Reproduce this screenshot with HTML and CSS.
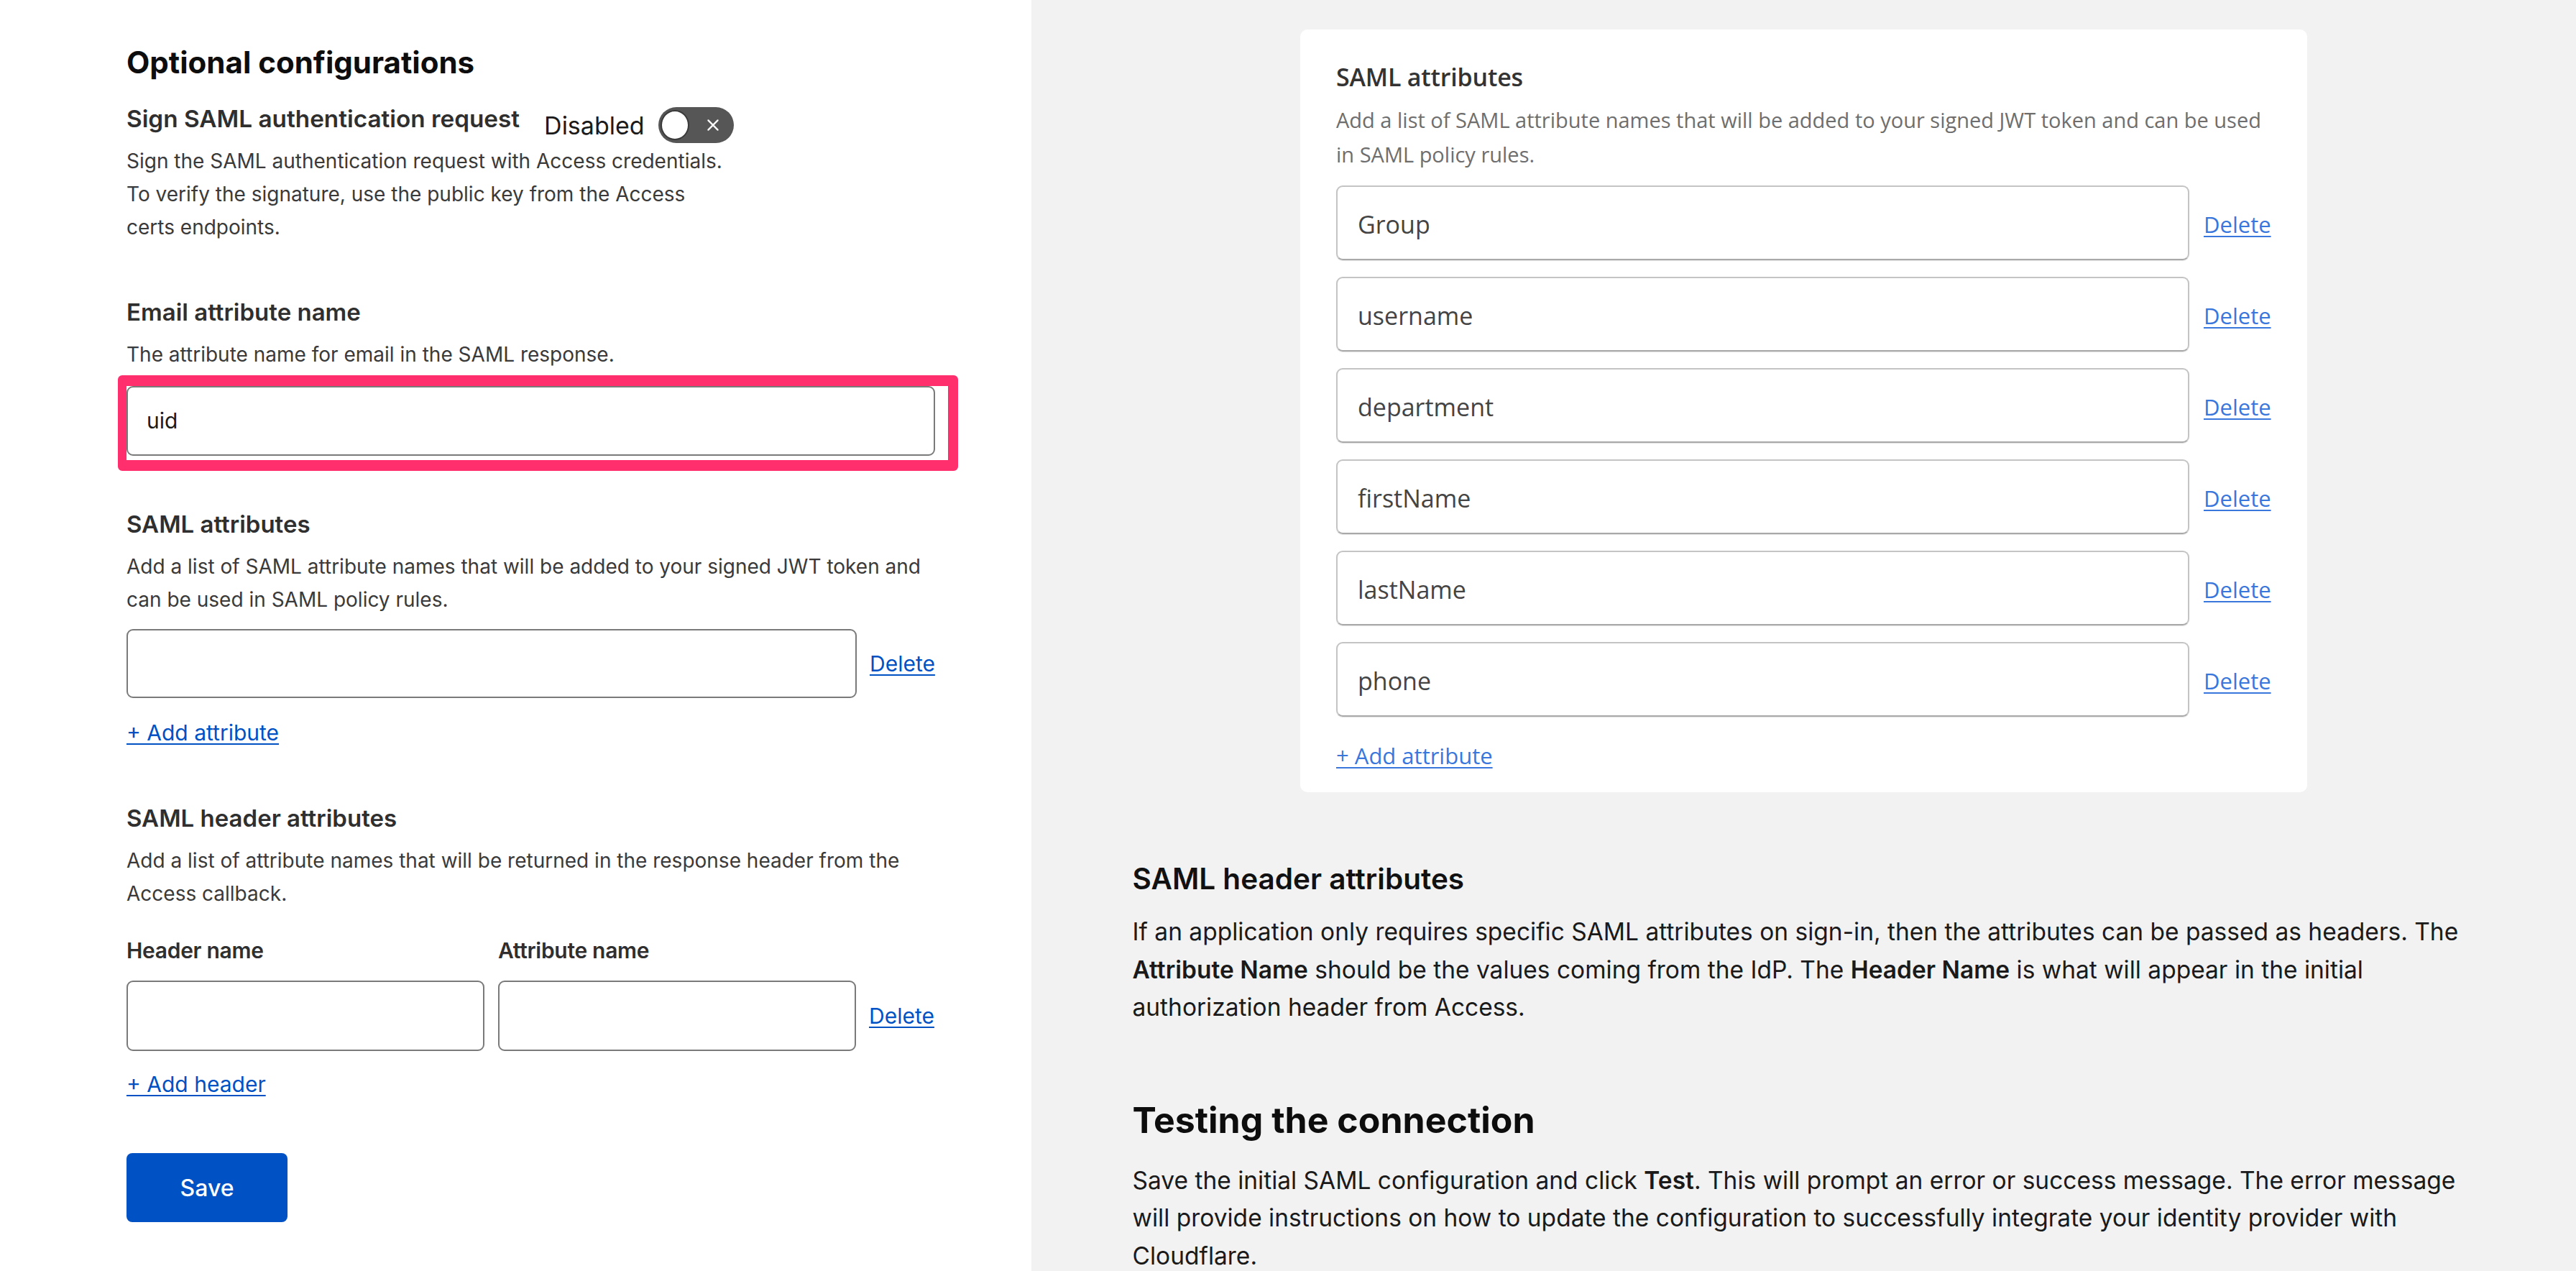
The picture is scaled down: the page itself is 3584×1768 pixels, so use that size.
FILE: index.html
```html
<!DOCTYPE html>
<html lang="en">
<head>
<meta charset="utf-8">
<title>SAML configuration</title>
<link rel="stylesheet" href="styles.css">
</head>
<body>
<div class="page">
  <section class="form-pane">
    <h2 class="title">Optional configurations</h2>

    <div class="toggle-row">
      <span class="label">Sign SAML authentication request</span>
      <span class="toggle-state">Disabled</span>
      <span class="switch">
        <span class="knob"></span>
        <svg class="switch-x" viewBox="0 0 20 20" width="20" height="20"><path d="M4 4 L16 16 M16 4 L4 16" stroke="#fff" stroke-width="2" fill="none" stroke-linecap="round"/></svg>
      </span>
    </div>
    <p class="help help-tight">Sign the SAML authentication request with Access credentials.<br>To verify the signature, use the public key from the Access<br>certs endpoints.</p>

    <div class="label label-email">Email attribute name</div>
    <p class="help help-under">The attribute name for email in the SAML response.</p>
    <div class="highlight">
      <div class="input input-full">uid</div>
    </div>

    <div class="label label-attrs">SAML attributes</div>
    <p class="help help-under">Add a list of SAML attribute names that will be added to your signed JWT token and<br>can be used in SAML policy rules.</p>
    <div class="input-row row-attrs">
      <div class="input input-wide"></div>
      <a class="link" href="#">Delete</a>
    </div>
    <a class="link add-link" href="#">+ Add attribute</a>

    <div class="label label-headers">SAML header attributes</div>
    <p class="help help-under">Add a list of attribute names that will be returned in the response header from the<br>Access callback.</p>
    <div class="pair-labels">
      <span class="pair-label">Header name</span>
      <span class="pair-label">Attribute name</span>
    </div>
    <div class="input-row row-pair">
      <div class="input input-half"></div>
      <div class="input input-half"></div>
      <a class="link" href="#">Delete</a>
    </div>
    <a class="link add-link" href="#">+ Add header</a>

    <div class="actions">
      <button class="save-btn" type="button">Save</button>
    </div>
  </section>

  <section class="doc-pane">
    <div class="card">
      <div class="card-title">SAML attributes</div>
      <p class="card-help">Add a list of SAML attribute names that will be added to your signed JWT token and can be used<br>in SAML policy rules.</p>
      <div class="card-rows">
        <div class="card-row"><div class="card-input">Group</div><a class="card-link" href="#">Delete</a></div>
        <div class="card-row"><div class="card-input">username</div><a class="card-link" href="#">Delete</a></div>
        <div class="card-row"><div class="card-input">department</div><a class="card-link" href="#">Delete</a></div>
        <div class="card-row"><div class="card-input">firstName</div><a class="card-link" href="#">Delete</a></div>
        <div class="card-row"><div class="card-input">lastName</div><a class="card-link" href="#">Delete</a></div>
        <div class="card-row"><div class="card-input">phone</div><a class="card-link" href="#">Delete</a></div>
      </div>
      <a class="card-link card-add" href="#">+ Add attribute</a>
    </div>

    <div class="doc">
      <h3 class="doc-h3">SAML header attributes</h3>
      <p class="doc-p">If an application only requires specific SAML attributes on sign-in, then the attributes can be passed as headers. The<br><strong>Attribute Name</strong> should be the values coming from the IdP. The <strong>Header Name</strong> is what will appear in the initial<br>authorization header from Access.</p>
      <h2 class="doc-h2">Testing the connection</h2>
      <p class="doc-p doc-p-last">Save the initial SAML configuration and click <strong>Test</strong>. This will prompt an error or success message. The error message<br>will provide instructions on how to update the configuration to successfully integrate your identity provider with<br>Cloudflare.</p>
    </div>
  </section>
</div>
</body>
</html>
```

FILE: styles.css
```css
html, body {
  margin: 0;
  padding: 0;
  background: #ffffff;
}

body {
  font-family: Inter, "Noto Sans", "Liberation Sans", sans-serif;
  color: #222;
}

.page {
  display: grid;
  grid-template-columns: 1435px 1fr;
  min-height: 1768px;
}

/* ---------- Left form pane ---------- */
.form-pane {
  background: #fff;
  padding: 64px 0 0 176px;
  display: flex;
  flex-direction: column;
  align-items: flex-start;
}

.title {
  margin: 0;
  font-size: 42px;
  line-height: 46px;
  font-weight: 700;
  color: #0d0d0d;
}

.label {
  font-size: 33px;
  line-height: 40px;
  font-weight: 600;
  color: #2f2f2f;
}

.toggle-row {
  margin-top: 35px;
  height: 52px;
  display: flex;
  align-items: center;
}

.toggle-row .label {
  align-self: flex-start;
  font-size: 33.3px;
}

.toggle-state {
  margin-left: 34px;
  font-size: 34px;
  line-height: 40px;
  color: #1b1b1b;
  margin-top: 8px;
}

.switch {
  margin-left: 19px;
  margin-top: 6px;
  width: 105px;
  height: 50px;
  border-radius: 25px;
  background: #565656;
  display: flex;
  align-items: center;
  justify-content: space-between;
  padding: 0 18px 0 3px;
  box-sizing: border-box;
}

.knob {
  width: 40px;
  height: 42px;
  border-radius: 50%;
  background: #fff;
  border: 2px solid #3a3a3a;
  box-sizing: border-box;
}

.switch-x {
  width: 22px;
  height: 22px;
}

.help {
  margin: 0;
  font-size: 28px;
  line-height: 46px;
  color: #3a3a3a;
}

.help-tight {
  margin-top: 4px;
}

.label-email {
  margin-top: 75px;
}

.help-under {
  margin-top: 16px;
}

.highlight {
  margin-top: 6px;
  margin-left: -12px;
  border: solid #ff2f6e;
  border-width: 15px 14px 15px 12px;
  border-radius: 6px;
  padding: 0 18px 6px 0;
  background: #fff;
}

.input {
  box-sizing: border-box;
  border: 2px solid #7a7a7a;
  border-radius: 9px;
  background: #fff;
  height: 97px;
  font-size: 30px;
  line-height: 93px;
  color: #1a1a1a;
  padding: 0 26px;
}

.input-full {
  width: 1125px;
}

.label-attrs {
  margin-top: 54px;
}

.input-row {
  display: flex;
  align-items: center;
  margin-top: 18px;
}

.input-wide {
  width: 1016px;
  height: 96px;
}

.link {
  color: #0051c3;
  text-decoration: underline;
  text-underline-offset: 4px;
  text-decoration-thickness: 2px;
  font-size: 30px;
  line-height: 40px;
}

.input-row .link {
  margin-left: 18px;
}

.add-link {
  margin-top: 28px;
}

.label-headers {
  margin-top: 79px;
}

.pair-labels {
  margin-top: 36px;
  display: flex;
}

.pair-label {
  width: 517px;
  font-size: 30px;
  line-height: 40px;
  font-weight: 600;
  color: #2f2f2f;
  letter-spacing: -0.3px;
}

.row-pair {
  margin-top: 22px;
}

.input-half {
  width: 498px;
  height: 98px;
}

.input-half + .input-half {
  margin-left: 19px;
}

.row-pair + .add-link {
  margin-top: 26px;
}

.actions {
  margin-top: 76px;
}

.save-btn {
  width: 224px;
  height: 96px;
  border: none;
  border-radius: 8px;
  background: #0051c3;
  color: #fff;
  font-family: Inter, "Noto Sans", "Liberation Sans", sans-serif;
  font-size: 32px;
  font-weight: 500;
  cursor: pointer;
}

/* ---------- Right documentation pane ---------- */
.doc-pane {
  background: #f2f2f2;
  display: flex;
  flex-direction: column;
  align-items: center;
  padding-top: 41px;
}

.card {
  width: 1401px;
  box-sizing: border-box;
  background: #fff;
  border-radius: 10px;
  padding: 46px 52px 31px 50px;
  font-family: "Open Sans", "Noto Sans", "Liberation Sans", sans-serif;
  display: flex;
  flex-direction: column;
  align-items: flex-start;
}

.card-title {
  font-size: 34px;
  line-height: 40px;
  font-weight: 600;
  color: #333;
  letter-spacing: -0.2px;
}

.card-help {
  margin: 16px 0 0;
  font-size: 29px;
  line-height: 48px;
  color: #6e6e6e;
}

.card-rows {
  margin-top: 19px;
  display: flex;
  flex-direction: column;
  gap: 23px;
}

.card-row {
  display: flex;
  align-items: center;
}

.card-input {
  box-sizing: border-box;
  width: 1187px;
  height: 104px;
  border: 2px solid #c4c4c4;
  border-bottom-color: #a9a9a9;
  border-radius: 9px;
  box-shadow: 0 1px 1px rgba(0, 0, 0, 0.12);
  padding: 4px 28px 0;
  font-size: 34px;
  line-height: 96px;
  color: #444;
}

.card-link {
  color: #3a77dc;
  text-decoration: underline;
  text-underline-offset: 4px;
  text-decoration-thickness: 2px;
  font-size: 31px;
  line-height: 40px;
}

.card-row .card-link {
  margin-left: 20px;
  margin-top: 4px;
}

.card-add {
  margin-top: 34px;
}

.doc {
  width: 1868px;
  margin-top: 97px;
}

.doc-h3 {
  margin: 0;
  font-size: 40.5px;
  line-height: 48px;
  font-weight: 600;
  color: #111;
}

.doc-p {
  margin: 23px 0 0;
  font-size: 33.5px;
  line-height: 52.5px;
  color: #1a1a1a;
}

.doc-p strong {
  font-weight: 600;
}

.doc-h2 {
  margin: 100px 0 0;
  font-size: 50px;
  line-height: 60px;
  font-weight: 700;
  color: #0d0d0d;
}

.doc-p-last {
  margin-top: 28px;
}
```
